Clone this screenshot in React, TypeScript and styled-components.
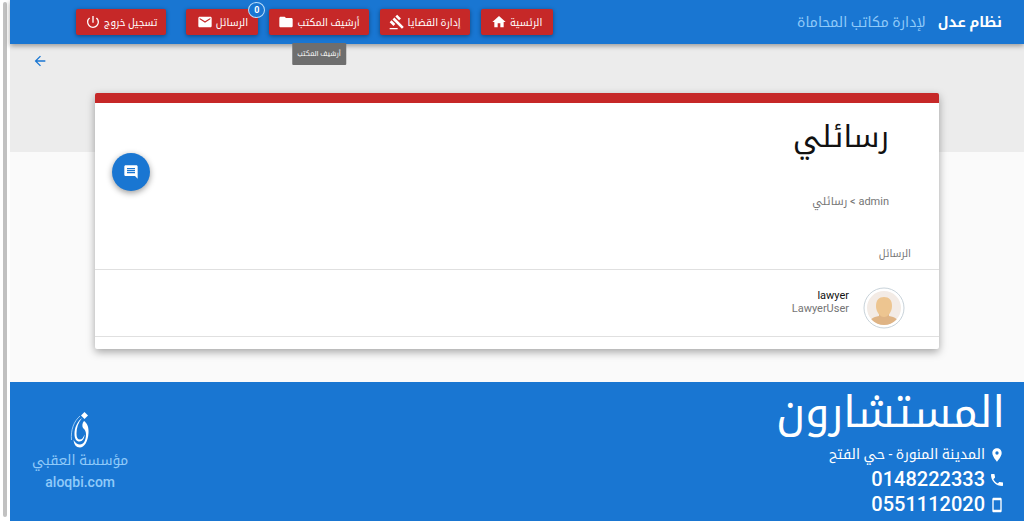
import React from 'react';
import styled, { createGlobalStyle } from 'styled-components';
import {
  MdHome,
  MdGavel,
  MdFolder,
  MdMail,
  MdPowerSettingsNew,
  MdArrowBack,
  MdComment,
  MdPlace,
  MdPhone,
  MdStayCurrentPortrait,
} from 'react-icons/md';

const color = {
  primary: '#1976d2',
  primaryLight: '#90caf9',
  accent: '#c62828',
  hero: '#ececec',
  page: '#fafafa',
  muted: '#757575',
};

const GlobalStyle = createGlobalStyle`
  * { box-sizing: border-box; }
  body {
    margin: 0;
    background: ${color.page};
    font-family: Roboto, "Noto Kufi Arabic", "Droid Arabic Kufi", "DejaVu Sans", sans-serif;
    color: #111;
  }
  h1, h2, p, ul { margin: 0; padding: 0; font-weight: 400; }
  ul { list-style: none; }
  a { color: inherit; text-decoration: none; }
  button { font-family: inherit; border: 0; padding: 0; cursor: pointer; }
  svg { flex: none; }
`;

const Shell = styled.div`
  display: flex;
  min-height: 100vh;
`;

const ScrollTrack = styled.div`
  display: flex;
  flex: none;
  width: 10px;
  padding: 2px 3px 4px;
  background: #fff;
`;

const ScrollThumb = styled.div`
  flex: 1;
  border-radius: 2px;
  background: #c1c1c1;
`;

const Page = styled.div`
  flex: 1;
  min-width: 0;
  display: flex;
  flex-direction: column;
`;

const Header = styled.header`
  position: relative;
  z-index: 1;
  display: flex;
  align-items: center;
  height: 44px;
  padding: 0 22px 0 66px;
  background: ${color.primary};
  box-shadow: 0 2px 5px rgba(0, 0, 0, 0.35);
`;

const Brand = styled.a`
  display: flex;
  align-items: baseline;
  gap: 12px;
  font-size: 14px;
  line-height: 24px;
  color: ${color.primaryLight};
  white-space: nowrap;
`;

const BrandName = styled.strong`
  color: #fff;
`;

const Nav = styled.nav`
  display: flex;
  gap: 11px;
  margin-inline-start: auto;
`;

const NavItem = styled.div<{ $apart?: boolean }>`
  position: relative;
  margin-inline-start: ${(p) => (p.$apart ? '9px' : '0')};
`;

const NavButton = styled.button`
  display: flex;
  align-items: center;
  justify-content: center;
  gap: 3px;
  min-width: 72px;
  height: 26px;
  padding: 0 9px;
  border-radius: 2px;
  background: ${color.accent};
  box-shadow: 0 1px 4px rgba(0, 0, 0, 0.4);
  color: #fff;
  font-size: 10px;
  white-space: nowrap;
`;

const Badge = styled.span`
  position: absolute;
  top: -7px;
  right: -7px;
  width: 17px;
  height: 16px;
  border: 1px solid #bbdefb;
  border-radius: 50%;
  background: ${color.primary};
  color: #fff;
  font-size: 9px;
  font-weight: 700;
  line-height: 14px;
  text-align: center;
`;

const Tooltip = styled.span`
  position: absolute;
  top: 34px;
  left: 50%;
  transform: translateX(-50%);
  padding: 0 5px;
  border-radius: 1px;
  background: #6e6e6e;
  color: #fff;
  font-size: 7px;
  line-height: 22px;
  white-space: nowrap;
`;

const Main = styled.main`
  flex: 1;
  padding-bottom: 33px;
  background: linear-gradient(${color.hero} 108px, ${color.page} 108px);
`;

const BackRow = styled.div`
  display: flex;
  justify-content: flex-end;
  height: 49px;
  padding: 9px 22px;
`;

const BackButton = styled.button`
  width: 16px;
  height: 16px;
  background: none;
  color: ${color.primary};
`;

const Card = styled.section`
  margin: 0 85px;
  border-top: 10px solid ${color.accent};
  border-radius: 2px;
  padding-bottom: 12px;
  background: #fff;
  box-shadow: 0 3px 8px rgba(0, 0, 0, 0.35);
`;

const CardHead = styled.div`
  display: flex;
  justify-content: space-between;
  align-items: flex-start;
  padding: 10px 50px 0 17px;
`;

const Title = styled.h1`
  font-size: 30px;
  line-height: 48px;
`;

const Crumbs = styled.p`
  margin-top: 31px;
  color: ${color.muted};
  font-size: 11px;
  line-height: 20px;
`;

const ComposeButton = styled.button`
  display: flex;
  align-items: center;
  justify-content: center;
  width: 38px;
  height: 38px;
  margin-top: 40px;
  border-radius: 50%;
  background: ${color.primary};
  box-shadow: 0 2px 6px rgba(0, 0, 0, 0.4);
  color: #fff;
`;

const ListTitle = styled.h2`
  padding: 31px 28px 4px;
  border-bottom: 1px solid #e0e0e0;
  color: ${color.muted};
  font-size: 10px;
  line-height: 22px;
`;

const MessageRow = styled.a`
  display: flex;
  align-items: center;
  gap: 14px;
  height: 67px;
  padding: 10px 34px 0;
  border-bottom: 1px solid #e0e0e0;
`;

const Avatar = styled.svg`
  width: 42px;
  height: 42px;
`;

const Person = styled.div`
  display: flex;
  flex-direction: column;
  padding-bottom: 12px;
  font-size: 11px;
  line-height: 13px;
`;

const Role = styled.span`
  color: ${color.muted};
`;

const Footer = styled.footer`
  display: flex;
  justify-content: space-between;
  padding: 0 19px 4px 22px;
  background: ${color.primary};
  color: #fff;
`;

const OfficeName = styled.h2`
  font-size: 43px;
  line-height: 60px;
`;

const Contact = styled.li<{ $large?: boolean }>`
  display: flex;
  align-items: center;
  gap: 4px;
  font-size: ${(p) => (p.$large ? '20px' : '14px')};
  font-weight: ${(p) => (p.$large ? 500 : 400)};
  line-height: 25px;
`;

const Maker = styled.a`
  display: flex;
  flex-direction: column;
  align-items: center;
  padding-top: 29px;
  color: ${color.primaryLight};
  font-size: 14px;
  line-height: 22px;
`;

const MakerLogo = styled.svg`
  width: 20px;
  height: 38px;
`;

const MakerSite = styled.span`
  font-weight: 500;
`;

export default function App() {
  return (
    <Shell>
      <GlobalStyle />
      <ScrollTrack>
        <ScrollThumb />
      </ScrollTrack>
      <Page dir="rtl" lang="ar">
        <Header>
          <Brand href="#">
            <BrandName>نظام عدل</BrandName>
            <span>لإدارة مكاتب المحاماة</span>
          </Brand>
          <Nav>
            <NavItem>
              <NavButton>
                الرئسية
                <MdHome size={16} />
              </NavButton>
            </NavItem>
            <NavItem>
              <NavButton>
                إدارة القضايا
                <MdGavel size={16} />
              </NavButton>
            </NavItem>
            <NavItem>
              <NavButton aria-describedby="archive-tip">
                أرشيف المكتب
                <MdFolder size={16} />
              </NavButton>
              <Tooltip role="tooltip" id="archive-tip">
                أرشيف المكتب
              </Tooltip>
            </NavItem>
            <NavItem>
              <NavButton>
                الرسائل
                <MdMail size={16} />
              </NavButton>
              <Badge>0</Badge>
            </NavItem>
            <NavItem $apart>
              <NavButton>
                تسجيل خروج
                <MdPowerSettingsNew size={16} />
              </NavButton>
            </NavItem>
          </Nav>
        </Header>

        <Main>
          <BackRow>
            <BackButton aria-label="رجوع">
              <MdArrowBack size={16} />
            </BackButton>
          </BackRow>
          <Card>
            <CardHead>
              <div>
                <Title>رسائلي</Title>
                <Crumbs>admin &gt; رسائلي</Crumbs>
              </div>
              <ComposeButton aria-label="رسالة جديدة">
                <MdComment size={16} />
              </ComposeButton>
            </CardHead>
            <ListTitle>الرسائل</ListTitle>
            <ul>
              <li>
                <MessageRow href="#">
                  <Avatar viewBox="0 0 42 42" aria-hidden="true">
                    <defs>
                      <clipPath id="face">
                        <circle cx="21" cy="21" r="17" />
                      </clipPath>
                    </defs>
                    <circle cx="21" cy="21" r="20" fill="#fff" stroke="#c9d3da" />
                    <g clipPath="url(#face)">
                      <rect width="42" height="42" fill="#f3ebe5" />
                      <path d="M6 38c0-6 4-8 10-9v-4h10v4c6 1 10 3 10 9z" fill="#dfb485" />
                      <path d="M13 19c0-6 3-9 8-9s8 3 8 9c0 6-4 11-8 11s-8-5-8-11z" fill="#edc590" />
                    </g>
                  </Avatar>
                  <Person>
                    <span>lawyer</span>
                    <Role>LawyerUser</Role>
                  </Person>
                </MessageRow>
              </li>
            </ul>
          </Card>
        </Main>

        <Footer>
          <div>
            <OfficeName>المستشارون</OfficeName>
            <ul>
              <Contact>
                <MdPlace size={16} />
                المدينة المنورة - حي الفتح
              </Contact>
              <Contact $large>
                <MdPhone size={16} />
                <a href="tel:0148222333">0148222333</a>
              </Contact>
              <Contact $large>
                <MdStayCurrentPortrait size={16} />
                <a href="tel:0551112020">0551112020</a>
              </Contact>
            </ul>
          </div>
          <Maker href="#">
            <MakerLogo viewBox="0 0 20 38" aria-hidden="true">
              <path d="M14.500 1l3.500 3.500-3.500 3.500-3.500-3.500z" fill="#fff" />
              <path
                d="M14 10c3 2 5 6 4.500 12C18 31 14 36.500 10 36.500c-4 0-6-3-6.500-7.500 2 3 4 4.500 6.500 4.500 3.500 0 6-4 6-10 0-3-1-5-3-6.500-1-2-1-4.500 1-7z"
                fill="#fff"
              />
              <path
                d="M12 7C7 11 4.500 17 4.500 23c0 5 2 7.500 5 7.500s5-3 5-7c-1 3-2.500 5-4.500 5-2.500 0-3.500-2-3.500-6C6.500 17 8 12 12 7z"
                fill="#fff"
              />
              <path d="M1.500 29C.5 19 4 10 10 5" fill="none" stroke="#bbdefb" strokeWidth="0.800" />
            </MakerLogo>
            <span>مؤسسة العقبي</span>
            <MakerSite>aloqbi.com</MakerSite>
          </Maker>
        </Footer>
      </Page>
    </Shell>
  );
}
